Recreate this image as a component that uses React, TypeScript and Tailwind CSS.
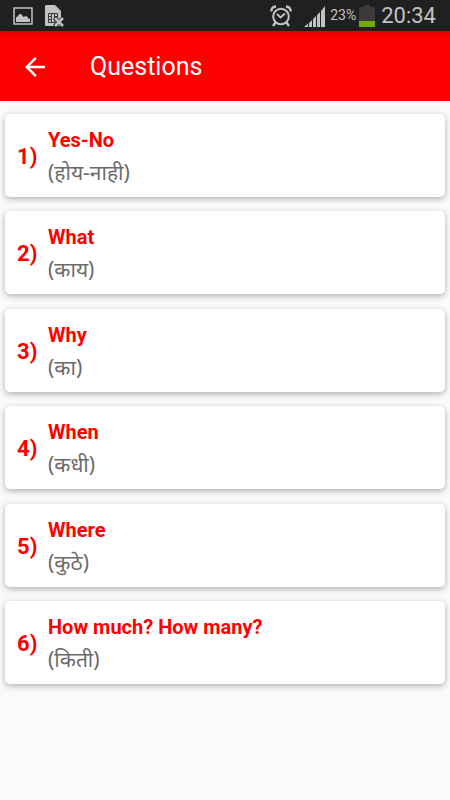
const questions = [
  { en: 'Yes-No', mr: 'होय-नाही' },
  { en: 'What', mr: 'काय' },
  { en: 'Why', mr: 'का' },
  { en: 'When', mr: 'कधी' },
  { en: 'Where', mr: 'कुठे' },
  { en: 'How much? How many?', mr: 'किती' },
]

function PictureIcon() {
  return (
    <svg viewBox="0 0 20 18" className="h-[18px] w-5" aria-hidden="true">
      <path d="M1 1H19V17H1Z" fill="none" stroke="#c2c2c2" strokeWidth="1.5" />
      <path d="M3 15V10.5L4.5 9.5L6.5 7L8 7L10.5 10L12.5 9L14 9.5L15.5 11.5L17 12V15Z" fill="#c2c2c2" />
    </svg>
  )
}

function SimIcon() {
  return (
    <svg viewBox="0 0 19 22" className="h-[22px] w-[19px]" aria-hidden="true">
      <path d="M1 0H10L16 6V21H1Q0 21 0 20V1Q0 0 1 0Z" fill="#c2c2c2" />
      <path d="M3.5 8.5H12.5V17.5H3.5ZM3.5 11.5H6.5M3.5 14.5H6.5M9.5 11.5H12.5M9.5 14.5H12.5M6.5 8.5V17.5M9.5 8.5V17.5" fill="none" stroke="#3a3a3a" strokeWidth="1" />
      <path d="M9.5 12.5L18.5 21.5M18.5 12.5L9.5 21.5" stroke="#202020" strokeWidth="4" />
      <path d="M10 13L18 21M18 13L10 21" stroke="#c2c2c2" strokeWidth="2.6" />
    </svg>
  )
}

function AlarmIcon() {
  return (
    <svg viewBox="0 0 22 22" className="size-[22px]" fill="none" stroke="#c2c2c2" aria-hidden="true">
      <circle cx="11" cy="11.5" r="7.8" strokeWidth="2" />
      <path d="M1.5 6.5Q1 2 6 1.5M20.5 6.5Q21 2 16 1.5" strokeWidth="2.4" />
      <path d="M5.5 17.5L3 21M16.5 17.5L19 21" strokeWidth="2.4" />
      <path d="M7 9L10.5 12.5L15 8.5" strokeWidth="1.8" />
    </svg>
  )
}

function SignalIcon() {
  return (
    <svg viewBox="0 0 22 22" className="size-[22px]" fill="#c2c2c2" aria-hidden="true">
      <path d="M0 22L4 18.5V22ZM5 18L8 15V22H5ZM9 14L12 11V22H9ZM13 10L16 7V22H13ZM17 6L21 1V22H17Z" />
    </svg>
  )
}

function BatteryIcon() {
  return (
    <svg viewBox="0 0 16 22" className="h-[22px] w-4" aria-hidden="true">
      <path d="M5 0H11V2H16V16H0V2H5Z" fill="#3b3b3b" />
      <path d="M0 16H16V22H0Z" fill="#78a800" />
    </svg>
  )
}

export default function App() {
  return (
    <div className="min-h-screen bg-[#fafafa] font-[Roboto,'Noto_Sans',sans-serif]">
      <div className="flex h-[31px] items-center justify-between bg-[#202020] pr-3.5 pl-[13px] text-[#c2c2c2]">
        <div className="flex items-center gap-3">
          <PictureIcon />
          <SimIcon />
        </div>
        <div className="flex items-center">
          <AlarmIcon />
          <div className="mr-1 ml-3">
            <SignalIcon />
          </div>
          <span className="mr-[3px] text-[14px]">23%</span>
          <BatteryIcon />
          <span className="ml-1.5 text-[22px] leading-7">20:34</span>
        </div>
      </div>

      <header className="flex h-[70px] items-center bg-linear-to-b from-[#e00000] to-[#ff0000] to-10% pt-0.5 text-white">
        <button type="button" aria-label="Back" className="ml-5">
          <svg viewBox="0 0 24 24" className="size-[30px]" fill="currentColor" aria-hidden="true">
            <path d="M20 11H7.83l5.59-5.59L12 4l-8 8 8 8 1.41-1.41L7.83 13H20v-2z" />
          </svg>
        </button>
        <h1 className="ml-10 text-[25px]">Questions</h1>
      </header>

      <ol className="px-[5px] pt-[13px]">
        {questions.map((q, i) => (
          <li
            key={q.en}
            className="flex h-[83px] items-center rounded-[5px] bg-white pl-3 shadow-[0_2px_6px_rgba(0,0,0,0.3)] odd:mb-[14px] even:mb-[15px]"
          >
            <span className="w-[31px] pt-0.5 text-[22px] font-bold text-[#ff0000]">{i + 1})</span>
            <div>
              <p className="text-[20px] leading-8 font-bold text-[#ff0000]">{q.en}</p>
              <p lang="mr" className="font-['Noto_Sans',Roboto,sans-serif] text-[21px] leading-8 text-[#6b6b6b]">({q.mr})</p>
            </div>
          </li>
        ))}
      </ol>
    </div>
  )
}
